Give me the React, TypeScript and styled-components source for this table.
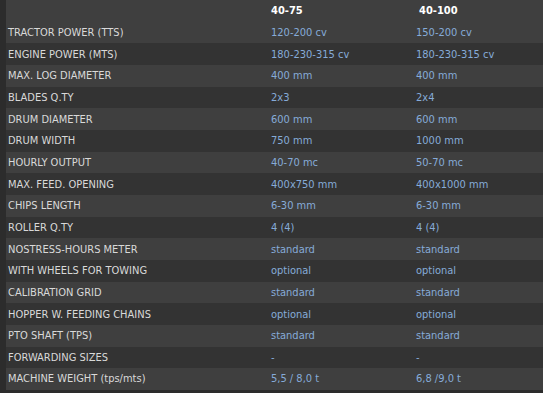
import React from 'react';
import styled, { createGlobalStyle } from 'styled-components';

const GlobalStyle = createGlobalStyle`
  html, body {
    margin: 0;
    padding: 0;
    background-color: #2c2c2c;
  }
`;

const Page = styled.div`
  width: 543px;
  height: 393px;
  overflow: hidden;
  background-color: #2c2c2c;
  padding-left: 6px;
  box-sizing: border-box;
`;

const Table = styled.div`
  display: flex;
  flex-direction: column;
  font-family: 'DejaVu Sans Condensed', 'DejaVu Sans', sans-serif;
  font-stretch: condensed;
  font-size: 11px;
`;

const Row = styled.div<{ $dark?: boolean }>`
  display: grid;
  grid-template-columns: 264px 145px 1fr;
  align-items: center;
  height: 21.67px;
  flex-shrink: 0;
  background-color: ${(p) => (p.$dark ? '#333333' : '#3f3f3f')};
`;

const Label = styled.div`
  padding-left: 2px;
  color: #d9d9d9;
  white-space: nowrap;
`;

const Value = styled.div`
  padding-left: 1px;
  color: #86abd8;
  white-space: nowrap;
`;

const HeadCell = styled.div<{ $indent?: number }>`
  padding-left: ${(p) => p.$indent ?? 1}px;
  color: #ffffff;
  font-weight: bold;
  white-space: nowrap;
`;

const specs: [string, string, string][] = [
  ['TRACTOR POWER (TTS)', '120-200 cv', '150-200 cv'],
  ['ENGINE POWER (MTS)', '180-230-315 cv', '180-230-315 cv'],
  ['MAX. LOG DIAMETER', '400 mm', '400 mm'],
  ['BLADES Q.TY', '2x3', '2x4'],
  ['DRUM DIAMETER', '600 mm', '600 mm'],
  ['DRUM WIDTH', '750 mm', '1000 mm'],
  ['HOURLY OUTPUT', '40-70 mc', '50-70 mc'],
  ['MAX. FEED. OPENING', '400x750 mm', '400x1000 mm'],
  ['CHIPS LENGTH', '6-30 mm', '6-30 mm'],
  ['ROLLER Q.TY', '4 (4)', '4 (4)'],
  ['NOSTRESS-HOURS METER', 'standard', 'standard'],
  ['WITH WHEELS FOR TOWING', 'optional', 'optional'],
  ['CALIBRATION GRID', 'standard', 'standard'],
  ['HOPPER W. FEEDING CHAINS', 'optional', 'optional'],
  ['PTO SHAFT (TPS)', 'standard', 'standard'],
  ['FORWARDING SIZES', '-', '-'],
  ['MACHINE WEIGHT (tps/mts)', '5,5 / 8,0 t', '6,8 /9,0 t'],
];

const App = () => {
  return (
    <>
      <GlobalStyle />
      <Page>
        <Table>
          <Row>
            <Label />
            <HeadCell>40-75</HeadCell>
            <HeadCell $indent={4}>40-100</HeadCell>
          </Row>
          {specs.map(([label, a, b], i) => (
            <Row key={label} $dark={i % 2 === 1}>
              <Label>{label}</Label>
              <Value>{a}</Value>
              <Value>{b}</Value>
            </Row>
          ))}
        </Table>
      </Page>
    </>
  );
};

export default App;
